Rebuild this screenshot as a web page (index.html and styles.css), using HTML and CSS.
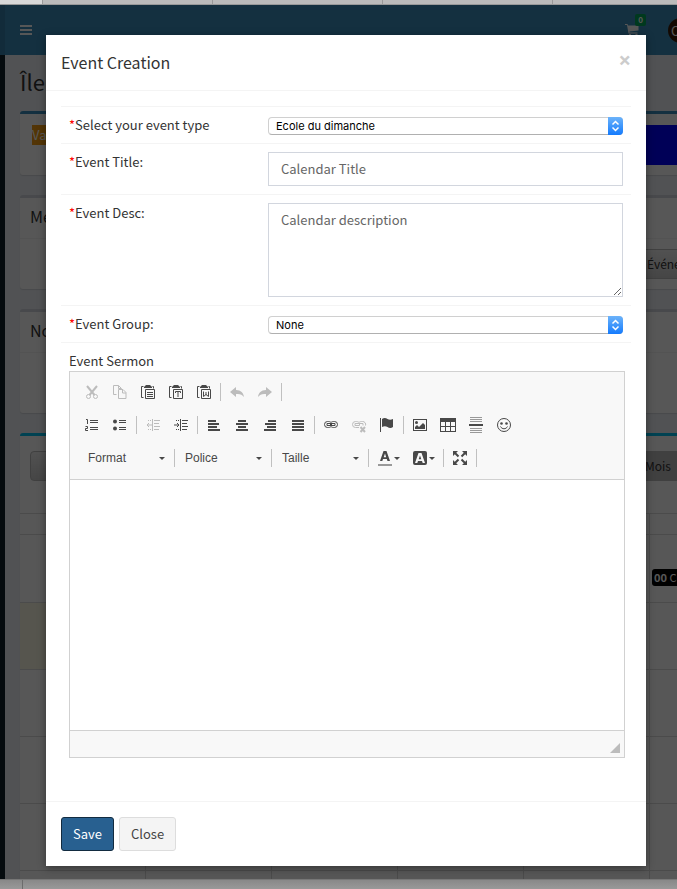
FILE: index.html
```html
<!DOCTYPE html>
<html lang="en">
<head>
    <meta charset="UTF-8">
    <meta name="viewport" content="width=device-width, initial-scale=1.0">
    <title>Event Creation</title>
    <link rel="stylesheet" href="styles.css">
</head>
<body>
    <div class="tab-strip"><span class="active"></span><span></span><span></span><span></span><span></span></div>

    <div class="app">
        <div class="page">
            <header class="main-header">
                <div class="logo"></div>
                <nav class="navbar">
                    <button type="button" class="sidebar-toggle" aria-label="Menu"><span></span><span></span><span></span></button>
                    <div class="navbar-right">
                        <a href="#" class="cart" aria-label="Cart">
                            <svg width="14" height="14" viewBox="0 0 14 14"><path d="M0 1h2.5l.5 1.500h10.500v5L4.500 8.500v1H12.500v1H3.500L2 2H0zM4 11h2v2H4zM10.500 11h2v2h-2z"/></svg>
                            <span class="badge">0</span>
                        </a>
                        <span class="avatar">C</span>
                    </div>
                </nav>
            </header>
            <div class="main">
                <aside class="sidebar"></aside>
                <section class="content">
                    <h1>Île</h1>
                    <div class="box box-primary filter-box">
                        <span class="tag-orange">Vacances</span>
                        <span class="tag-blue"></span>
                    </div>
                    <div class="box menu-box">
                        <h3>Menu</h3>
                        <div class="box-body"><button type="button" class="btn-grey">Événements</button></div>
                    </div>
                    <div class="box note-box">
                        <h3>Notes</h3>
                        <div class="box-body"></div>
                    </div>
                    <div class="box box-info">
                        <div class="calendar-bar">
                            <button type="button" class="btn-grey" aria-label="Previous"></button>
                            <button type="button" class="btn-grey pressed">Mois</button>
                        </div>
                        <table class="calendar">
                            <thead>
                                <tr><th></th><th></th><th></th><th></th><th></th><th></th><th></th></tr>
                            </thead>
                            <tbody>
                                <tr><td></td><td></td><td></td><td></td><td></td><td><a href="#" class="event"><b>00</b> Culte</a></td><td></td></tr>
                                <tr><td class="today"></td><td></td><td></td><td></td><td></td><td></td><td></td></tr>
                                <tr><td></td><td></td><td></td><td></td><td></td><td></td><td></td></tr>
                                <tr><td></td><td></td><td></td><td></td><td></td><td></td><td></td></tr>
                                <tr><td></td><td></td><td></td><td></td><td></td><td></td><td></td></tr>
                                <tr><td></td><td></td><td></td><td></td><td></td><td></td><td></td></tr>
                            </tbody>
                        </table>
                    </div>
                </section>
            </div>
        </div>

        <div class="modal">
            <form class="modal-content" role="dialog" aria-labelledby="modalTitle">
                <div class="modal-header">
                    <h4 id="modalTitle">Event Creation</h4>
                    <button type="button" class="close" aria-label="Close dialog">×</button>
                </div>
                <div class="modal-body">
                    <div class="form-table">
                        <div class="form-row">
                            <label for="eventType"><span class="required">*</span>Select your event type</label>
                            <div class="mac-select">
                                <select id="eventType"><option>Ecole du dimanche</option></select>
                                <svg width="15" height="18" viewBox="0 0 15 18"><path d="M4.500 7.500l3-3 3 3M4.500 10.500l3 3 3-3"/></svg>
                            </div>
                        </div>
                        <div class="form-row">
                            <label for="eventTitle"><span class="required">*</span>Event Title:</label>
                            <input type="text" id="eventTitle" class="form-control" placeholder="Calendar Title">
                        </div>
                        <div class="form-row">
                            <label for="eventDesc"><span class="required">*</span>Event Desc:</label>
                            <textarea id="eventDesc" class="form-control" rows="4" placeholder="Calendar description"></textarea>
                        </div>
                        <div class="form-row">
                            <label for="eventGroup"><span class="required">*</span>Event Group:</label>
                            <div class="mac-select">
                                <select id="eventGroup"><option>None</option></select>
                                <svg width="15" height="18" viewBox="0 0 15 18"><path d="M4.500 7.500l3-3 3 3M4.500 10.500l3 3 3-3"/></svg>
                            </div>
                        </div>
                        <div class="form-row-full">
                            <label for="eventSermon">Event Sermon</label>
                            <div class="editor">
                                <div class="toolbar">
                                    <div class="tool-row">
                                        <button type="button" class="tool" aria-label="Cut" disabled><svg viewBox="0 0 16 16"><path class="s" d="M3 2l7.500 9M13 2L5.500 11" stroke-width="2"/><circle class="s" cx="4.500" cy="12.500" r="2"/><circle class="s" cx="11.500" cy="12.500" r="2"/></svg></button>
                                        <button type="button" class="tool" aria-label="Copy" disabled><svg viewBox="0 0 16 16"><path class="s" d="M4.500 10.500h-3v-9h5l3 3M6.500 1.500v3h3M6.500 5.500h4.500l3 3v6H6.500zM10.500 5.500v3.500h3.500"/></svg></button>
                                        <button type="button" class="tool" aria-label="Paste"><svg viewBox="0 0 16 16"><path d="M4 3l2-2h4l2 2v1H4z"/><path class="s" d="M3.500 2.500h-2v11h2M12.500 2.500h1v2M5.500 5.500h9v9h-9zM7 8.500h6M7 10.500h6M7 12.500h6"/></svg></button>
                                        <button type="button" class="tool" aria-label="Paste as plain text"><svg viewBox="0 0 16 16"><path d="M4 3l2-2h4l2 2v1H4z"/><path class="s" d="M3.500 2.500h-2v11h2M12.500 2.500h1v2M5.500 5.500h9v9h-9zM7.500 9V7.500h5V9M10 8v5"/></svg></button>
                                        <button type="button" class="tool" aria-label="Paste from Word"><svg viewBox="0 0 16 16"><path d="M4 3l2-2h4l2 2v1H4z"/><path class="s" d="M3.500 2.500h-2v11h2M12.500 2.500h1v2M5.500 5.500h9v9h-9zM7.500 7.500v5l2.500-2 2.500 2v-5M10 8v3"/></svg></button>
                                        <span class="separator"></span>
                                        <button type="button" class="tool" aria-label="Undo" disabled><svg viewBox="0 0 16 16"><path d="M1 8l6-5v3c5 0 7.500 3 8 7-2-2.500-4-3.500-8-3v3z"/></svg></button>
                                        <button type="button" class="tool" aria-label="Redo" disabled><svg viewBox="0 0 16 16"><path d="M15 8L9 3v3c-5 0-7.500 3-8 7 2-2.500 4-3.500 8-3v3z"/></svg></button>
                                        <span class="separator"></span>
                                    </div>
                                    <div class="tool-row">
                                        <button type="button" class="tool" aria-label="Numbered list"><svg viewBox="0 0 16 16"><path class="s" d="M2 2.500h1.500V7M1.500 9.500h2v2h-2v2H4M6 3.500h8M6 5.500h8M6 10.500h8M6 12.500h8"/></svg></button>
                                        <button type="button" class="tool" aria-label="Bulleted list"><svg viewBox="0 0 16 16"><circle cx="3" cy="4.500" r="2"/><circle cx="3" cy="11.500" r="2"/><path class="s" d="M7 3.500h7M7 5.500h7M7 10.500h7M7 12.500h7"/></svg></button>
                                        <span class="separator"></span>
                                        <button type="button" class="tool" aria-label="Decrease indent" disabled><svg viewBox="0 0 16 16"><path class="s" d="M7.500 2v12M9 3.500h6M9 6.500h5M9 9.500h6M9 12.500h5M2 8h5M4 6L2 8l2 2"/><path d="M3 3h1v1H3zM5 3h1v1H5zM3 12h1v1H3zM5 12h1v1H5z"/></svg></button>
                                        <button type="button" class="tool" aria-label="Increase indent"><svg viewBox="0 0 16 16"><path class="s" d="M7.500 2v12M9 3.500h6M9 6.500h5M9 9.500h6M9 12.500h5M1 8h5M4 6l2 2-2 2"/><path d="M3 3h1v1H3zM5 3h1v1H5zM3 12h1v1H3zM5 12h1v1H5z"/></svg></button>
                                        <span class="separator"></span>
                                        <button type="button" class="tool" aria-label="Align left"><svg viewBox="0 0 16 16"><path d="M2 3h8v2H2zM2 6h11v2H2zM2 9h9v2H2zM2 12h12v2H2z"/></svg></button>
                                        <button type="button" class="tool" aria-label="Center"><svg viewBox="0 0 16 16"><path d="M4 3h8v2H4zM2 6h12v2H2zM4 9h8v2H4zM2 12h12v2H2z"/></svg></button>
                                        <button type="button" class="tool" aria-label="Align right"><svg viewBox="0 0 16 16"><path d="M6 3h8v2H6zM3 6h11v2H3zM5 9h9v2H5zM2 12h12v2H2z"/></svg></button>
                                        <button type="button" class="tool" aria-label="Justify"><svg viewBox="0 0 16 16"><path d="M2 3h12v2H2zM2 6h12v2H2zM2 9h12v2H2zM2 12h12v2H2z"/></svg></button>
                                        <span class="separator"></span>
                                        <button type="button" class="tool" aria-label="Link"><svg viewBox="0 0 16 16"><path class="s" d="M8 5.500C7 4.500 6 4.500 4.500 4.500a3 3 0 0 0 0 6c1.500 0 2.500 0 3.500-1M8 5.500c1-1 2-1 3.500-1a3 3 0 0 1 0 6c-1.500 0-2.500 0-3.500-1M4 6.500h4.500v2H4zM7.500 6.500H12v2H7.500z"/></svg></button>
                                        <button type="button" class="tool" aria-label="Unlink" disabled><svg viewBox="0 0 16 16"><path class="s" d="M8 5.500C7 4.500 6 4.500 4.500 4.500a3 3 0 0 0 0 6H8M8 5.500c1-1 2-1 3.500-1a3 3 0 0 1 3 4M4 6.500h4.500v2H4zM8 6.500h4v2"/><path class="s" d="M9.500 10l4.500 5M14 10l-4.500 5" stroke-width="2"/></svg></button>
                                        <button type="button" class="tool" aria-label="Anchor"><svg viewBox="0 0 16 16"><path d="M1 1h1v14H1zM3 2c2-1.500 4-1 5.500 0S12 3 14 2v8c-2 1.500-4 1-5.500 0S5 9 3 10z"/></svg></button>
                                        <span class="separator"></span>
                                        <button type="button" class="tool" aria-label="Image"><svg viewBox="0 0 16 16"><path d="M1 2h14v12H1zM2 3v10h12V3z" fill-rule="evenodd"/><circle cx="4.500" cy="5.500" r="1.500"/><path d="M3 12v-2l2-2 2 2 4-4 2 2v4z"/></svg></button>
                                        <button type="button" class="tool" aria-label="Table"><svg viewBox="0 0 16 16"><path d="M0 1h16v14H0zM1 5v4h4V5zM6 5v4h4V5zM11 5v4h4V5zM1 10v4h4v-4zM6 10v4h4v-4zM11 10v4h4v-4z" fill-rule="evenodd"/></svg></button>
                                        <button type="button" class="tool" aria-label="Horizontal line"><svg viewBox="0 0 16 16"><path class="light" d="M2 0h12v1H2zM2 2h12v1H2zM2 4h12v1H2zM2 11h12v1H2zM2 13h12v1H2zM2 15h12v1H2z"/><path d="M1 7h14v2H1z"/></svg></button>
                                        <button type="button" class="tool" aria-label="Smiley"><svg viewBox="0 0 16 16"><circle class="s" cx="8" cy="8" r="6.500"/><circle cx="5.500" cy="6.500" r="1.300"/><circle cx="10.500" cy="6.500" r="1.300"/><path class="s" d="M4.500 9.500c1.500 3 5.500 3 7 0"/></svg></button>
                                    </div>
                                    <div class="tool-row tool-row-combos">
                                        <span class="combo"><select aria-label="Format"><option>Format</option></select></span>
                                        <span class="separator"></span>
                                        <span class="combo"><select aria-label="Police"><option>Police</option></select></span>
                                        <span class="separator"></span>
                                        <span class="combo"><select aria-label="Taille"><option>Taille</option></select></span>
                                        <span class="separator"></span>
                                        <button type="button" class="tool tool-color" aria-label="Text color"><svg viewBox="0 0 16 16"><path d="M6.500 1h3L13 11h-2.500l-.700-2H6l-.700 2H3zM8 3.500L6.700 7.300h2.500z" fill-rule="evenodd"/><path class="light" d="M1 14h14v2H1z"/></svg></button>
                                        <button type="button" class="tool tool-color" aria-label="Background color"><svg viewBox="0 0 16 16"><path d="M3 1h10a2 2 0 0 1 2 2v10a2 2 0 0 1-2 2H3a2 2 0 0 1-2-2V3a2 2 0 0 1 2-2zM6.500 3L3 13h2.300l.7-2h4l.7 2H13L9.500 3zM8 5.500l1.300 3.800H6.700z" fill-rule="evenodd"/></svg></button>
                                        <span class="separator"></span>
                                        <button type="button" class="tool" aria-label="Maximize"><svg viewBox="0 0 16 16"><path d="M1 1h5L1 6zM15 1v5l-5-5zM1 15v-5l5 5zM15 15h-5l5-5z"/><path class="s" d="M3 3l3.500 3.500M13 3L9.500 6.500M3 13l3.500-3.500M13 13L9.500 9.500" stroke-width="2"/></svg></button>
                                        <span class="separator"></span>
                                    </div>
                                </div>
                                <textarea id="eventSermon" class="editor-text"></textarea>
                                <div class="editor-footer"><span class="resizer"></span></div>
                            </div>
                        </div>
                    </div>
                </div>
                <div class="modal-footer">
                    <button type="submit" class="btn btn-primary">Save</button>
                    <button type="button" class="btn btn-default">Close</button>
                </div>
            </form>
        </div>
    </div>

    <div class="bottom-strip"><span></span></div>
</body>
</html>
```

FILE: styles.css
```css
* {
    box-sizing: border-box;
}
body {
    margin: 0;
    height: 100vh;
    display: flex;
    flex-direction: column;
    overflow: hidden;
    font-family: "Noto Sans CJK SC", "Open Sans", sans-serif;
    font-size: 13px;
    line-height: 20px;
    color: #333;
}
button, input, select, textarea {
    font: inherit;
    color: inherit;
    margin: 0;
}
h1, h3, h4 {
    margin: 0;
    font-weight: normal;
}
a {
    color: inherit;
    text-decoration: none;
}

/* browser edges */
.tab-strip {
    flex: none;
    height: 5px;
    display: flex;
    overflow: hidden;
    background: #bbb;
    border-bottom: 1px solid #999;
}
.tab-strip span {
    flex: 0 0 170px;
    border-right: 1px solid #999;
}
.tab-strip .active {
    flex-basis: 43px;
    background: #d8d8d8;
}
.bottom-strip {
    flex: none;
    height: 10px;
    display: flex;
    background: linear-gradient(#888, #999);
    border-top: 1px solid #777;
}
.bottom-strip span {
    width: 23px;
    border-right: 1px solid #6c6c6c;
}

/* page behind the dialog */
.app {
    flex: 1;
    min-height: 0;
    position: relative;
    overflow: hidden;
}
.page {
    min-width: 917px;
}
.main-header {
    display: flex;
    height: 50px;
}
.logo {
    width: 5px;
    background: #367fa9;
}
.navbar {
    flex: 1;
    display: flex;
    align-items: center;
    justify-content: space-between;
    padding: 0 224px 0 15px;
    background: #3c8dbc;
}
.sidebar-toggle {
    display: flex;
    flex-direction: column;
    gap: 2px;
    padding: 0;
    border: 0;
    background: none;
}
.sidebar-toggle span {
    width: 12px;
    height: 2px;
    background: #fff;
}
.navbar-right {
    display: flex;
    align-items: center;
    gap: 29px;
}
.cart {
    position: relative;
    height: 14px;
}
.cart svg {
    display: block;
    fill: #fff;
}
.badge {
    position: absolute;
    top: -9px;
    left: 10px;
    width: 11px;
    height: 12px;
    border-radius: 2px;
    background: #00a65a;
    color: #fff;
    font-size: 8px;
    font-weight: bold;
    line-height: 12px;
    text-align: center;
}
.avatar {
    width: 25px;
    height: 25px;
    padding-left: 3px;
    border-radius: 50%;
    background: #3a1c08;
    color: #fff;
    line-height: 25px;
}
.main {
    display: flex;
}
.sidebar {
    width: 5px;
    background: #0f202a;
}
.content {
    flex: 1;
    padding: 13px 15px 0;
    background: #ecf0f5;
}
.content h1 {
    margin-bottom: 17px;
    font-size: 22px;
    line-height: 26px;
}
.box {
    margin-bottom: 20px;
    border-top: 3px solid #d2d6de;
    border-radius: 3px;
    background: #fff;
    box-shadow: 0 1px 1px rgba(0, 0, 0, 0.1);
}
.box h3 {
    padding: 8px 10px 12px;
    border-bottom: 1px solid #f4f4f4;
    font-size: 16px;
}
.box-primary {
    border-top-color: #3c8dbc;
}
.box-info {
    border-top-color: #00c0ef;
}
.filter-box {
    display: flex;
    justify-content: space-between;
    align-items: start;
    height: 64px;
    padding: 11px 12px;
}
.tag-orange {
    background: #f39c12;
    color: #fff;
}
.tag-blue {
    width: 300px;
    height: 40px;
    background: #0000ff;
}
.box-body {
    height: 50px;
    padding: 10px;
}
.note-box .box-body {
    height: 60px;
}
.menu-box .box-body {
    padding-left: 616px;
}
.btn-grey {
    height: 30px;
    min-width: 40px;
    padding: 0 10px;
    border: 1px solid #bbb;
    border-radius: 4px;
    background: linear-gradient(#eee, #ccc);
    font-size: 12px;
}
.btn-grey.pressed {
    background: #bbb;
}
.calendar-bar {
    display: flex;
    gap: 564px;
    height: 77px;
    padding: 15px 10px;
}
.calendar {
    width: 100%;
    table-layout: fixed;
    border-collapse: collapse;
}
.calendar th, .calendar td {
    padding: 0;
    border: 1px solid #ddd;
    border-left: 0;
}
.calendar th {
    height: 21px;
}
.calendar td {
    height: 67px;
    vertical-align: bottom;
}
.calendar tbody tr:first-child td {
    height: 68px;
}
.calendar .today {
    background: #fcf8e3;
}
.event {
    display: block;
    margin: 0 2px 16px;
    padding-left: 2px;
    border-radius: 3px;
    background: #000;
    color: #fff;
    font-size: 11px;
    line-height: 17px;
}

/* dialog */
.modal {
    position: absolute;
    inset: 0;
    padding: 30px 31px 0 46px;
    background: rgba(0, 0, 0, 0.66);
}
.modal-content {
    background: #fff;
    box-shadow: 0 2px 8px rgba(0, 0, 0, 0.4);
}
.modal-header {
    display: flex;
    justify-content: space-between;
    align-items: start;
    padding: 15px;
    border-bottom: 1px solid #f4f4f4;
}
.modal-header h4 {
    font-size: 16px;
    line-height: 25px;
}
.close {
    padding: 0;
    border: 0;
    background: none;
    color: #ccc;
    font-family: "Open Sans", sans-serif;
    font-size: 22px;
    font-weight: bold;
    line-height: 18px;
}
.modal-body {
    padding: 15px 15px 35px;
}
.form-row {
    display: grid;
    grid-template-columns: 199px 1fr;
    border-top: 1px solid #f4f4f4;
}
.form-row > * {
    margin: 8px;
}
.form-row-full {
    padding: 8px;
    border-top: 1px solid #f4f4f4;
}
.form-row-full label {
    display: block;
}
.required {
    color: red;
}
.form-control {
    width: auto;
    min-width: 0;
    height: 34px;
    padding: 5px 12px 7px;
    border: 1px solid #d2d6de;
    border-radius: 0;
    background: #fff;
    outline: 0;
}
textarea.form-control {
    height: 94px;
    padding: 6px 12px;
}
.form-control::placeholder {
    color: #666;
    opacity: 1;
}
.mac-select {
    position: relative;
    height: 20px;
    padding-top: 2px;
}
.mac-select select {
    display: block;
    width: 100%;
    height: 18px;
    padding: 0 20px 0 7px;
    appearance: none;
    border: 1px solid #d0d0d0;
    border-bottom-color: #b0b0b0;
    border-radius: 4px;
    background: #fff;
    color: #000;
    font-family: Inter, sans-serif;
    font-size: 11px;
    line-height: normal;
}
.mac-select svg {
    position: absolute;
    top: 2px;
    right: 0;
    border-radius: 0 4px 4px 0;
    background: linear-gradient(#6cb3fa, #147bfd);
    fill: none;
    stroke: #fff;
    stroke-width: 1.5;
    pointer-events: none;
}

/* rich text editor */
.editor {
    box-sizing: content-box;
    width: 100%;
    border: 1px solid #d1d1d1;
}
.toolbar {
    padding: 6px 8px 2px;
    border-bottom: 1px solid #d1d1d1;
    background: #f8f8f8;
}
.tool-row {
    display: flex;
    align-items: center;
    height: 28px;
    margin-bottom: 5px;
}
.tool-row-combos {
    padding-left: 2px;
}
.tool {
    flex: none;
    width: 28px;
    height: 28px;
    padding: 6px;
    border: 0;
    background: none;
    color: #484848;
}
.tool:disabled {
    color: #bcbcbc;
}
.tool svg {
    display: block;
    width: 16px;
    height: 16px;
    fill: currentColor;
}
.tool .s {
    fill: none;
    stroke: currentColor;
}
.tool .light {
    fill: #999;
}
.separator {
    flex: none;
    width: 1px;
    height: 18px;
    margin: 0 2px;
    background: #c0c0c0;
}
.combo {
    display: flex;
    align-items: center;
    width: 92px;
    padding-right: 7px;
}
.combo select {
    flex: 1;
    min-width: 0;
    padding: 0 0 0 8px;
    appearance: none;
    border: 0;
    background: none;
    color: #484848;
    font-family: "Liberation Sans", Arial, sans-serif;
    font-size: 12px;
}
.combo::after, .tool-color::after {
    content: "";
    border: 3px solid transparent;
    border-top-color: #484848;
    border-bottom: 0;
}
.tool-color {
    display: flex;
    align-items: center;
    gap: 1px;
    width: 35px;
    padding: 6px 5px 6px 6px;
}
.tool-color svg {
    flex: none;
}
.editor-text {
    display: block;
    width: 100%;
    height: 250px;
    padding: 20px;
    border: 0;
    outline: 0;
    resize: none;
}
.editor-footer {
    display: flex;
    justify-content: flex-end;
    align-items: flex-end;
    height: 27px;
    padding: 4px;
    border-top: 1px solid #d1d1d1;
    background: #f8f8f8;
}
.resizer {
    border: 5px solid #bcbcbc;
    border-top-color: transparent;
    border-left-color: transparent;
}
.modal-footer {
    display: flex;
    gap: 5px;
    padding: 15px;
    border-top: 1px solid #f4f4f4;
}
.btn {
    height: 34px;
    padding: 6px 11px;
    border: 1px solid #ddd;
    border-radius: 3px;
    background: #f4f4f4;
    color: #444;
}
.btn-primary {
    border-color: #122b40;
    background: #286090;
    color: #fff;
}
```
